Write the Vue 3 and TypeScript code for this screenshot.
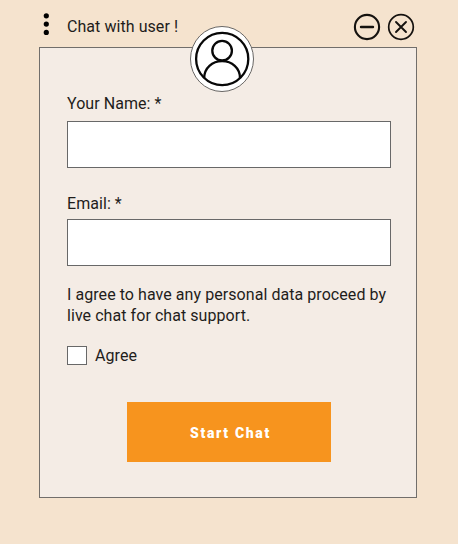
<script setup lang="ts">
import { ref } from 'vue'

const name = ref<string>('')
const email = ref<string>('')
const agreed = ref<boolean>(false)
</script>

<template>
  <main class="chat">
    <header class="bar">
      <svg class="dots" width="6" height="24" viewBox="0 0 6 24">
        <circle cx="3.3" cy="2.8" r="2.6" />
        <circle cx="3.3" cy="11.1" r="2.6" />
        <circle cx="3.3" cy="19.4" r="2.6" />
      </svg>
      <span class="title">Chat with user !</span>
      <div class="actions">
        <svg class="icon" width="28" height="28" viewBox="0 0 28 28">
          <circle cx="14" cy="14" r="12.1" stroke-width="2.1" />
          <path d="M8 14h12" stroke-width="2.4" stroke-linecap="round" />
        </svg>
        <svg class="icon" width="28" height="28" viewBox="0 0 28 28">
          <circle cx="14" cy="14" r="12.3" stroke-width="1.7" />
          <path d="M9 9l10 10M19 9l-10 10" stroke-width="1.9" stroke-linecap="round" />
        </svg>
      </div>
    </header>

    <form class="card" @submit.prevent>
      <svg class="avatar" width="64" height="66" viewBox="0 0 64 66">
        <ellipse class="disc" cx="32" cy="33" rx="31.5" ry="32.5" />
        <circle class="line" cx="32.2" cy="33" r="26.1" />
        <circle class="line" cx="32.1" cy="24.7" r="9.8" />
        <path class="line" d="M14.2 52.1c0-10 8-16.9 17.9-16.9s17.9 6.9 17.9 16.9" />
      </svg>

      <label class="field name">
        <span>Your Name: *</span>
        <input v-model="name" type="text" />
      </label>
      <label class="field email">
        <span>Email: *</span>
        <input v-model="email" type="text" />
      </label>
      <p class="terms">I agree to have any personal data proceed by live chat for chat support.</p>
      <label class="agree">
        <input v-model="agreed" type="checkbox" />
        <span>Agree</span>
      </label>
      <button class="start" type="submit">Start Chat</button>
    </form>
  </main>
</template>

<style>
body {
  background: #f5e3ce;
}
</style>

<style scoped>
.chat {
  box-sizing: border-box;
  width: 458px;
  height: 544px;
  padding: 0 41px 0 39px;
  background: #f5e3ce;
  color: #1f1d1b;
  font: 16px/21px Roboto, sans-serif;
  letter-spacing: 0.06px;
}

.bar {
  box-sizing: border-box;
  display: flex;
  align-items: center;
  height: 47px;
  padding: 6px 2px 0 4px;
}

.dots {
  margin: 0 18px 4px 0;
  fill: #000;
}

.actions {
  display: flex;
  gap: 6px;
  margin-left: auto;
}

.icon {
  fill: none;
  stroke: #15120f;
}

.card {
  position: relative;
  box-sizing: border-box;
  display: flex;
  flex-direction: column;
  height: 451px;
  padding: 45px 25px 0 27px;
  border: 1px solid #716e6b;
  background: #f4ece5;
}

.avatar {
  position: absolute;
  top: -22px;
  left: 150px;
}

.disc {
  fill: #fff;
  stroke: #686664;
  stroke-width: 1;
}

.line {
  fill: none;
  stroke: #080808;
  stroke-width: 2.3;
}

.field {
  display: flex;
  flex-direction: column;
}

.name {
  gap: 7px;
}

.email {
  gap: 5px;
  margin-top: 25px;
}

.field input {
  box-sizing: border-box;
  width: 100%;
  height: 47px;
  margin: 0;
  padding: 0 12px;
  border: 1px solid #686868;
  border-radius: 0;
  background: #fff;
  font: inherit;
  outline: none;
}

.terms {
  margin: 18px 0 0;
}

.agree {
  display: flex;
  align-items: center;
  gap: 8px;
  margin-top: 19px;
}

.agree input {
  appearance: none;
  box-sizing: border-box;
  width: 20px;
  height: 19px;
  margin: 0;
  border: 1px solid #686868;
  background: #fff;
}

.agree input:checked {
  background: #f7941e;
}

.start {
  align-self: center;
  width: 204px;
  height: 60px;
  margin-top: 36px;
  padding: 2px 0 0 3px;
  border: 0;
  background: #f7941e;
  color: #fff;
  font: 900 14px/20px Roboto, sans-serif;
  letter-spacing: 1.65px;
}
</style>
